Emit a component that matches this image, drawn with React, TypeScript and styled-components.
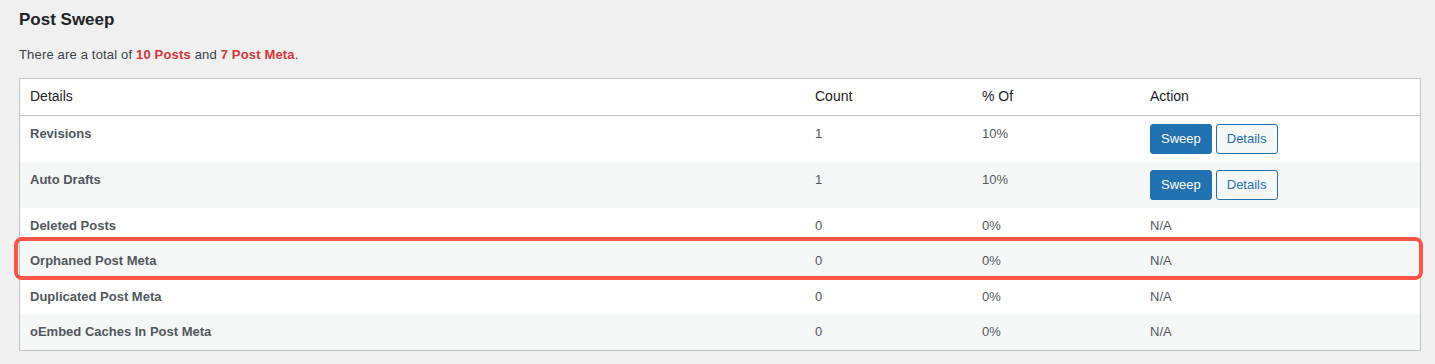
import React from 'react';
import styled, { createGlobalStyle } from 'styled-components';

const GlobalStyle = createGlobalStyle`
  html, body {
    margin: 0;
    padding: 0;
    background: #f0f0f1;
  }
  body {
    font-family: "Liberation Sans", Arial, sans-serif;
    font-size: 13px;
    color: #3c434a;
  }
`;

const Page = styled.div`
  padding: 9px 14px 14px 19px;
  width: 1402px;
`;

const Title = styled.h2`
  margin: 0 0 14px;
  font-size: 17px;
  line-height: 22px;
  font-weight: 700;
  color: #1d2327;
`;

const Intro = styled.p`
  margin: 0 0 14px;
  font-size: 13px;
  line-height: 19px;
  letter-spacing: 0.17px;
`;

const Count = styled.strong`
  color: #d63638;
  font-weight: 700;
`;

const TableWrap = styled.div`
  position: relative;
`;

const Table = styled.table`
  width: 100%;
  border-collapse: collapse;
  table-layout: fixed;
  background: #fff;
  border: 1px solid #c3c4c7;
  box-sizing: border-box;
`;

const HeadCell = styled.th<{ $width?: number }>`
  width: ${(p) => (p.$width ? `${p.$width}px` : 'auto')};
  text-align: left;
  font-weight: 400;
  font-size: 14px;
  line-height: 19.6px;
  color: #1d2327;
  padding: 8px 10px;
  border-bottom: 1px solid #c3c4c7;
`;

const Row = styled.tr<{ $alt?: boolean }>`
  background: ${(p) => (p.$alt ? '#f6f7f7' : '#fff')};
`;

const Cell = styled.td`
  vertical-align: top;
  padding: 8px 10px;
  font-size: 13px;
  line-height: 19.5px;
  color: #50575e;
`;

const Label = styled.strong`
  font-weight: 700;
  color: #50575e;
`;

const Actions = styled.div`
  display: flex;
  gap: 4px;
`;

const Button = styled.button<{ $primary?: boolean }>`
  font-family: inherit;
  font-size: 13px;
  line-height: 26px;
  min-height: 30px;
  padding: 0 10px;
  border-radius: 3px;
  cursor: pointer;
  border: 1px solid #2271b1;
  background: ${(p) => (p.$primary ? '#2271b1' : '#f6f7f7')};
  color: ${(p) => (p.$primary ? '#fff' : '#2271b1')};
`;

const Highlight = styled.div`
  position: absolute;
  left: -5px;
  top: 159px;
  width: 1409px;
  height: 43px;
  box-sizing: border-box;
  border: 4px solid #fd5548;
  border-radius: 8px;
  pointer-events: none;
`;

type Item = { label: string; count: number; pct: string; sweep: boolean };

const items: Item[] = [
  { label: 'Revisions', count: 1, pct: '10%', sweep: true },
  { label: 'Auto Drafts', count: 1, pct: '10%', sweep: true },
  { label: 'Deleted Posts', count: 0, pct: '0%', sweep: false },
  { label: 'Orphaned Post Meta', count: 0, pct: '0%', sweep: false },
  { label: 'Duplicated Post Meta', count: 0, pct: '0%', sweep: false },
  { label: 'oEmbed Caches In Post Meta', count: 0, pct: '0%', sweep: false },
];

export default function App() {
  return (
    <>
      <GlobalStyle />
      <Page>
        <Title>Post Sweep</Title>
        <Intro>
          There are a total of <Count>10 Posts</Count> and <Count>7 Post Meta</Count>.
        </Intro>
        <TableWrap>
          <Table>
            <thead>
              <tr>
                <HeadCell $width={765}>Details</HeadCell>
                <HeadCell $width={147}>Count</HeadCell>
                <HeadCell $width={148}>% Of</HeadCell>
                <HeadCell>Action</HeadCell>
              </tr>
            </thead>
            <tbody>
              {items.map((item, i) => (
                <Row key={item.label} $alt={i % 2 === 1}>
                  <Cell>
                    <Label>{item.label}</Label>
                  </Cell>
                  <Cell>{item.count}</Cell>
                  <Cell>{item.pct}</Cell>
                  <Cell>
                    {item.sweep ? (
                      <Actions>
                        <Button $primary>Sweep</Button>
                        <Button>Details</Button>
                      </Actions>
                    ) : (
                      'N/A'
                    )}
                  </Cell>
                </Row>
              ))}
            </tbody>
          </Table>
          <Highlight />
        </TableWrap>
      </Page>
    </>
  );
}
